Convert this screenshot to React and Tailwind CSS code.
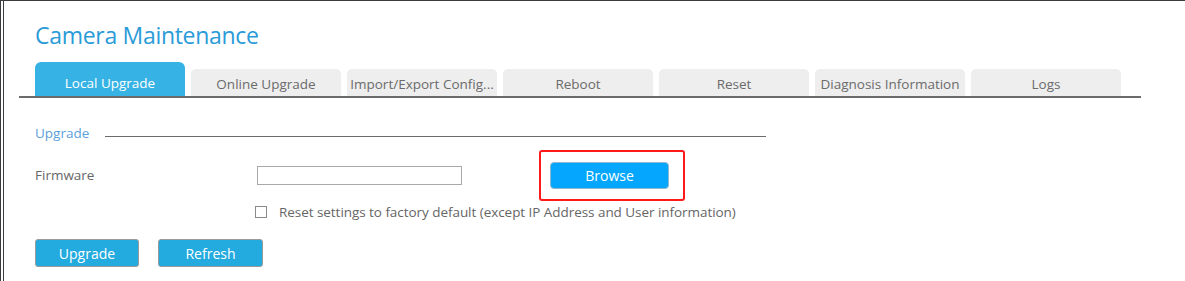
import { useState } from 'react';

const tabs = [
  'Local Upgrade',
  'Online Upgrade',
  'Import/Export Config...',
  'Reboot',
  'Reset',
  'Diagnosis Information',
  'Logs',
];

export default function App() {
  const [active, setActive] = useState(0);
  const [reset, setReset] = useState(false);

  return (
    <div
      className="w-[1185px] h-[281px] bg-white border-t border-l border-[#3a3d40] overflow-hidden"
      style={{ fontFamily: '"Open Sans", "Noto Sans", sans-serif' }}
    >
      <div className="ml-[2px] h-full border-l border-[#3a3d40]">
        <h1 className="pl-[31px] pt-[19px] text-[23px] leading-[30px] text-[#2a9bd8] tracking-[-0.3px]">
          Camera Maintenance
        </h1>

        {/* tab bar */}
        <div className="ml-[15px] mt-[13px] w-[1122px] h-[35px] flex items-end gap-[6px] pl-[16px] border-b-2 border-[#6b6b6b]">
          {tabs.map((t, i) =>
            i === active ? (
              <button
                key={t}
                onClick={() => setActive(i)}
                className="w-[150px] h-[34px] rounded-t-[6px] bg-[#36b3e4] text-white text-[13.5px] pt-[8px]"
              >
                {t}
              </button>
            ) : (
              <button
                key={t}
                onClick={() => setActive(i)}
                className="w-[150px] h-[27px] rounded-t-[5px] bg-[#eeeeee] text-[#6b6b6b] text-[13.5px] pt-[3px] whitespace-nowrap overflow-hidden"
              >
                {t}
              </button>
            )
          )}
        </div>

        {/* section */}
        <div className="pl-[31px] pt-[25px]">
          <div className="flex items-center h-[20px]">
            <span className="text-[13.5px] text-[#5b9fdc]">Upgrade</span>
            <div className="ml-[16px] w-[661px] h-px bg-[#6b6b6b] mt-[6px]" />
          </div>

          <div className="flex items-center mt-[7px] h-[51px]">
            <span className="w-[222px] text-[13.5px] text-[#666]">Firmware</span>
            <input
              type="text"
              className="w-[205px] h-[19px] border border-[#a9a9a9] outline-none"
            />
            <div className="ml-[77px] w-[146px] h-[51px] border-2 border-[#ff1a1a] rounded-[3px] flex items-center pl-[9px]">
              <button className="w-[119px] h-[27px] rounded-[4px] bg-[#04a7fd] border border-[#8fb8d0] text-white text-[14px]">
                Browse
              </button>
            </div>
          </div>

          <label className="flex items-center ml-[220px] h-[22px] cursor-pointer">
            <span
              onClick={() => setReset(!reset)}
              className="w-[12px] h-[12px] border border-[#8a8a8a] bg-white flex items-center justify-center text-[9px] leading-none text-[#333]"
            >
              {reset ? '✓' : ''}
            </span>
            <span className="ml-[12px] text-[13.5px] text-[#666] tracking-[-0.05px]">
              Reset settings to factory default (except IP Address and User information)
            </span>
          </label>

          <div className="flex gap-[19px] mt-[16px]">
            <button className="w-[104px] h-[28px] rounded-[3px] bg-[#23aade] border border-[#9a9a9a] text-white text-[14px]">
              Upgrade
            </button>
            <button className="w-[105px] h-[28px] rounded-[3px] bg-[#23aade] border border-[#9a9a9a] text-white text-[14px]">
              Refresh
            </button>
          </div>
        </div>
      </div>
    </div>
  );
}
